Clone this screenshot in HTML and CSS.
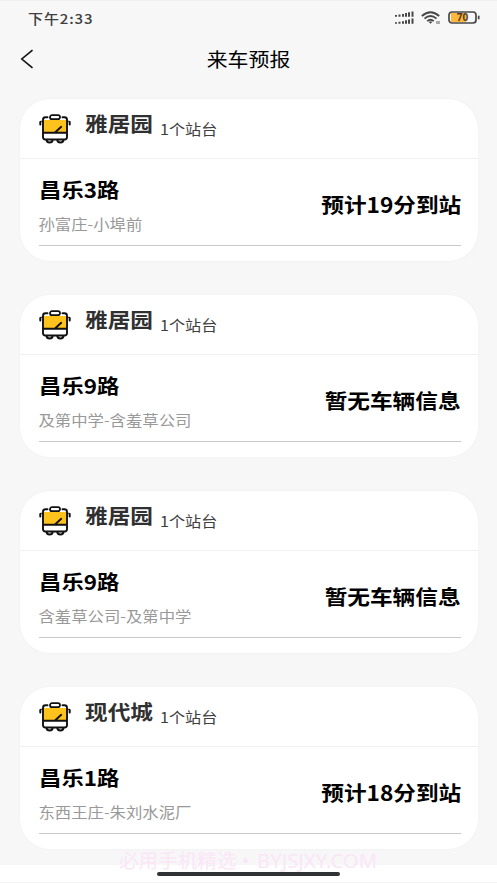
FILE: index.html
```html
<!DOCTYPE html>
<html lang="zh-CN">
<head>
<meta charset="utf-8">
<title>来车预报</title>
<link rel="stylesheet" href="styles.css">
</head>
<body>
<svg class="defs" width="0" height="0" aria-hidden="true">
  <symbol id="bus" viewBox="0 0 32 30">
    <path d="M5 6h22v13H5z" fill="#fdc31c"/>
    <path d="M5 19h22v6H5z" fill="#fff"/>
    <path d="M7.500 25.500a3 3 0 0 0 6.200 0M18.300 25.500a3 3 0 0 0 6.200 0" fill="#fff" stroke="#111" stroke-width="2"/>
    <path d="M8.500 3.200H6.500Q4 3.200 4 5.700V23Q4 25.500 6.500 25.500H25.500Q28 25.500 28 23V5.700Q28 3.200 25.500 3.200H23.500M4 18.800H28M16 18.500L22.200 12.800" fill="none" stroke="#111" stroke-width="1.900" stroke-linecap="round"/>
    <path d="M1.300 8V10.500M30.700 8V10.500" stroke="#111" stroke-width="2" stroke-linecap="round"/>
    <path d="M1.300 7.300H4M28 7.300H30.700" stroke="#111" stroke-width="1"/>
    <rect x="11" y="1.200" width="10" height="4" rx="2" fill="#fff" stroke="#111" stroke-width="1.800"/>
  </symbol>
</svg>
<div class="screen">
  <header class="status">
    <span class="time">下午2:33</span>
    <div class="indicators">
      <svg width="20" height="14" viewBox="0 0 20 14"><path d="M2 5.700V4M5.500 5.700V3.500M9 5.700V3M12 5.700V2M15 5.700V1.300M18.500 5.700V.5M2 12.700V11.200M5.500 12.700V10.700M9 12.700V10.200M12 12.700V9.300M15 12.700V8.500M18.500 12.700V7.500" fill="none" stroke="#484848" stroke-width="2"/></svg>
      <svg width="20" height="14" viewBox="0 0 20 14"><g fill="none" stroke="#484848" stroke-width="1.800"><path d="M.8 5Q9.500-2.600 18.200 5M3.500 7.600Q9.500 2.300 15.500 7.600M6.200 10.100Q9.500 7.400 12.800 10.100"/></g><path d="M7.700 11Q9.500 9.700 11.300 11L9.500 12.800z" fill="#484848"/><path d="M16 10v3M18 10v3" stroke="#777" stroke-width="1.200"/></svg>
      <svg width="32" height="13" viewBox="0 0 32 13"><rect x="3" y="2" width="15" height="9" fill="#fdb83c"/><rect x="1" y="1" width="27" height="11" rx="3" fill="none" stroke="#484848" stroke-width="1.700"/><path d="M30.700 4.700v3.600" stroke="#484848" stroke-width="1.700"/><text x="14.500" y="9.900" class="charge">70</text></svg>
    </div>
  </header>
  <nav class="titlebar">
    <svg width="14" height="20" viewBox="0 0 14 20"><path d="M12.500 1.200L1.800 10L12.500 18.800" fill="none" stroke="#111" stroke-width="1.600"/></svg>
    <h1>来车预报</h1>
  </nav>
  <main class="list">
    <section class="card">
      <div class="stop"><svg class="bus"><use href="#bus"/></svg><h2>雅居园</h2><span class="count">1个站台</span></div>
      <div class="trip"><div class="route"><h3>昌乐3路</h3><p>孙富庄-小埠前</p></div><strong>预计19分到站</strong></div>
    </section>
    <section class="card">
      <div class="stop"><svg class="bus"><use href="#bus"/></svg><h2>雅居园</h2><span class="count">1个站台</span></div>
      <div class="trip"><div class="route"><h3>昌乐9路</h3><p>及第中学-含羞草公司</p></div><strong>暂无车辆信息</strong></div>
    </section>
    <section class="card">
      <div class="stop"><svg class="bus"><use href="#bus"/></svg><h2>雅居园</h2><span class="count">1个站台</span></div>
      <div class="trip"><div class="route"><h3>昌乐9路</h3><p>含羞草公司-及第中学</p></div><strong>暂无车辆信息</strong></div>
    </section>
    <section class="card">
      <div class="stop"><svg class="bus"><use href="#bus"/></svg><h2>现代城</h2><span class="count">1个站台</span></div>
      <div class="trip"><div class="route"><h3>昌乐1路</h3><p>东西王庄-朱刘水泥厂</p></div><strong>预计18分到站</strong></div>
    </section>
  </main>
  <footer class="gesture"><i class="handle"></i></footer>
  <div class="watermark">必用手机精选 • <span>BYJSJXY.COM</span></div>
</div>
</body>
</html>
```

FILE: styles.css
```css
* { box-sizing: border-box; }
body, h1, h2, h3, p { margin: 0; }
body { font-family: "Noto Sans CJK SC", sans-serif; background: #f7f7f7; color: #000; }
.defs { position: absolute; }
.screen {
  position: relative;
  width: 497px;
  height: 883px;
  overflow: hidden;
  display: flex;
  flex-direction: column;
  background: #f7f7f7;
  border-top: 1px solid #efefef;
}
.status {
  height: 34px;
  flex: none;
  display: flex;
  align-items: center;
  justify-content: space-between;
  padding: 0 17px 1px 28px;
}
.time {
  font-size: 13.4px;
  font-weight: 500;
  line-height: 20px;
  letter-spacing: .8px;
  color: #404040;
  transform: scaleX(1.12);
  transform-origin: left;
}
.indicators { display: flex; align-items: center; gap: 7px; }
.charge { font: bold 10px "Noto Sans", sans-serif; fill: #553b1d; text-anchor: middle; }
.titlebar {
  height: 48px;
  flex: none;
  display: grid;
  grid-template-columns: 14px 1fr 14px;
  align-items: center;
  padding: 0 20px;
}
h1 { font-size: 19px; font-weight: 400; line-height: 28px; text-align: center; transform: scaleX(1.1); }
.list { flex: none; height: 782px; padding: 16px 19px 0 20px; display: flex; flex-direction: column; gap: 34px; }
.card {
  flex: none;
  height: 162px;
  background: #fff;
  border-radius: 30px;
  box-shadow: 0 0 2px #ececec;
}
.stop { height: 60px; display: flex; align-items: flex-start; padding-left: 19px; border-bottom: 1px solid #f0f0f0; }
.bus { width: 32px; height: 30px; margin-top: 15px; }
h2, h3, .count, p, strong { transform: scaleX(1.1); transform-origin: left; white-space: nowrap; }
h2 { width: 75px; margin: 9px 0 0 14px; font-size: 20.6px; line-height: 30px; color: #303030; }
.count { margin-top: 19px; font-size: 14.7px; line-height: 22px; color: #404040; }
.trip {
  height: 87px;
  margin: 0 17px 0 19px;
  display: flex;
  justify-content: space-between;
  border-bottom: 1px solid #c8c8c8;
}
h3 { margin-top: 15px; font-size: 20.4px; line-height: 30px; }
p { margin-top: 9px; font-size: 14.8px; line-height: 22px; color: #999; transform: translateX(-.5px) scaleX(1.105); }
strong { margin-top: 30px; font-size: 20.6px; line-height: 30px; transform-origin: right; }
.gesture {
  position: relative;
  height: 18px;
  flex: none;
  background: #fff;
  border-bottom: 1px solid #f3f3f3;
  display: flex;
  justify-content: center;
  padding-top: 6.5px;
}
.handle { width: 183px; height: 4px; border-radius: 2px; background: #303233; }
.watermark {
  position: absolute;
  left: 119px;
  top: 846px;
  font: 19.6px/28px "Noto Sans", "Noto Sans CJK SC", sans-serif;
  color: #fbe6f8;
  white-space: nowrap;
}
.watermark span { display: inline-block; margin-left: 3px; transform: scaleX(1.035); transform-origin: left; }
```
